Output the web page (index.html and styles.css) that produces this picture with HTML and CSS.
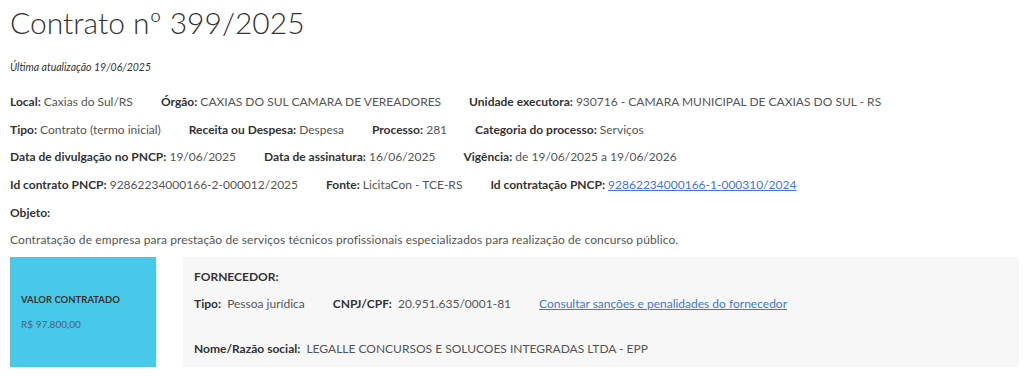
FILE: index.html
```html
<!DOCTYPE html>
<html lang="pt-BR">
<head>
<meta charset="utf-8">
<title>Contrato nº 399/2025</title>
<link rel="stylesheet" href="styles.css">
</head>
<body>
<main class="page">
  <h1 class="title">Contrato nº 399/2025</h1>
  <p class="updated">Última atualização 19/06/2025</p>

  <div class="row">
    <span class="field"><b>Local:</b> Caxias do Sul/RS</span>
    <span class="field"><b>Órgão:</b> CAXIAS DO SUL CAMARA DE VEREADORES</span>
    <span class="field"><b>Unidade executora:</b> 930716 - CAMARA MUNICIPAL DE CAXIAS DO SUL - RS</span>
  </div>
  <div class="row">
    <span class="field"><b>Tipo:</b> Contrato (termo inicial)</span>
    <span class="field"><b>Receita ou Despesa:</b> Despesa</span>
    <span class="field"><b>Processo:</b> 281</span>
    <span class="field"><b>Categoria do processo:</b> Serviços</span>
  </div>
  <div class="row">
    <span class="field"><b>Data de divulgação no PNCP:</b> 19/06/2025</span>
    <span class="field"><b>Data de assinatura:</b> 16/06/2025</span>
    <span class="field"><b>Vigência:</b> de 19/06/2025 a 19/06/2026</span>
  </div>
  <div class="row">
    <span class="field"><b>Id contrato PNCP:</b> 92862234000166-2-000012/2025</span>
    <span class="field"><b>Fonte:</b> LicitaCon - TCE-RS</span>
    <span class="field"><b>Id contratação PNCP:</b> <a href="#">92862234000166-1-000310/2024</a></span>
  </div>
  <div class="row">
    <span class="field"><b>Objeto:</b></span>
  </div>
  <div class="row">
    <span class="field desc">Contratação de empresa para prestação de serviços técnicos profissionais especializados para realização de concurso público.</span>
  </div>

  <section class="cards">
    <div class="value-card">
      <div class="value-label">VALOR CONTRATADO</div>
      <div class="value-amount">R$ 97.800,00</div>
    </div>
    <div class="supplier">
      <div class="supplier-title">FORNECEDOR:</div>
      <div class="supplier-row">
        <span class="sfield"><b>Tipo:</b>&nbsp; Pessoa jurídica</span>
        <span class="sfield"><b>CNPJ/CPF:</b>&nbsp; 20.951.635/0001-81</span>
        <a href="#" class="sfield">Consultar sanções e penalidades do fornecedor</a>
      </div>
      <div class="supplier-row name">
        <span class="sfield"><b>Nome/Razão social:</b>&nbsp; LEGALLE CONCURSOS E SOLUCOES INTEGRADAS LTDA - EPP</span>
      </div>
    </div>
  </section>
</main>
</body>
</html>
```

FILE: styles.css
```css
* { box-sizing: border-box; }
html, body { margin: 0; padding: 0; background: #fff; }
body {
  font-family: "Lato", "Open Sans", "Liberation Sans", sans-serif;
  color: #555;
  font-size: 12px;
}
.page { padding: 0 5px 0 10px; }
.title {
  margin: 0;
  padding-top: 5px;
  font-size: 30px;
  line-height: 34px;
  font-weight: 300;
  color: #333;
}
.updated {
  margin: 21px 0 14px;
  font-size: 10.5px;
  line-height: 14px;
  font-style: italic;
  color: #333;
}
.row {
  display: flex;
  gap: 28px;
  height: 27.6px;
  align-items: center;
  white-space: nowrap;
}
.row b, .supplier b { font-weight: 700; color: #333; }
.field { color: #555; }
.desc { letter-spacing: 0.1px; }
a { color: #3f78cc; text-decoration: underline; }
.cards {
  display: flex;
  gap: 27px;
  margin-top: 3px;
  height: 110px;
}
.value-card {
  width: 146px;
  background: #48c9e9;
  display: flex;
  flex-direction: column;
  justify-content: center;
  padding-left: 11px;
  gap: 13px;
}
.value-label { font-size: 9.5px; font-weight: 700; color: #333; }
.value-amount { font-size: 10px; color: #4a6474; }
.supplier {
  flex: 1;
  background: #f7f7f7;
  padding: 13px 11px 0;
}
.supplier-title { font-weight: 700; color: #333; line-height: 14px; }
.supplier-row {
  display: flex;
  gap: 28px;
  margin-top: 13px;
  line-height: 14px;
  white-space: nowrap;
}
.supplier-row.name { margin-top: 31px; }
```
